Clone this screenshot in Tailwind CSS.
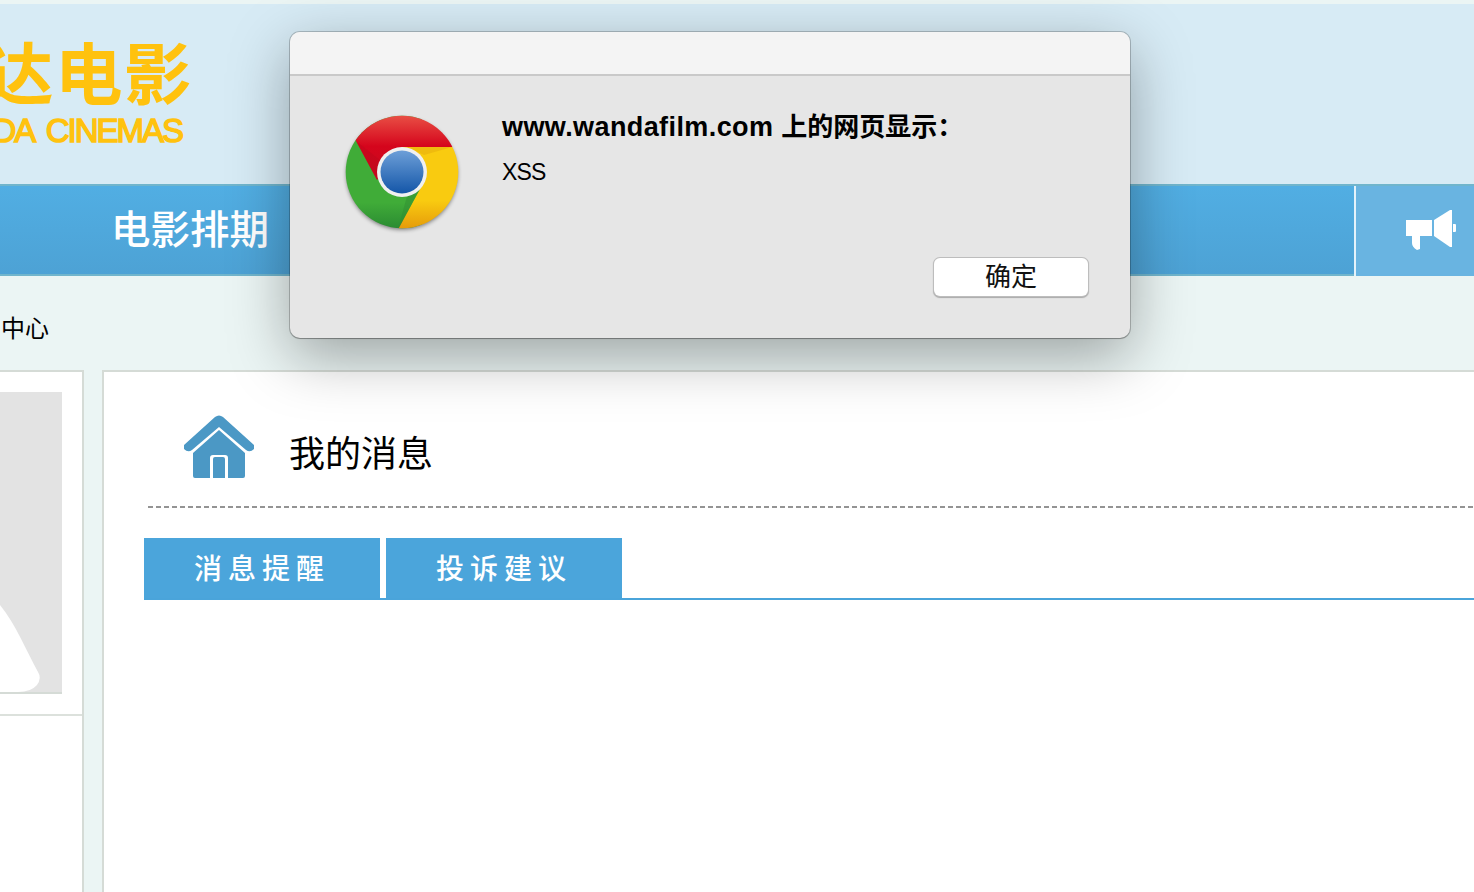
<!DOCTYPE html>
<html lang="zh-CN">
<head>
<meta charset="utf-8">
<title>我的消息</title>
<script src="https://cdn.jsdelivr.net/npm/@tailwindcss/browser@4"></script>
</head>
<body class="relative flex h-[892px] w-[1474px] flex-col overflow-hidden bg-[#ebf5f4] pt-1 font-['Liberation_Sans','Noto_Sans_CJK_SC',sans-serif] text-black">
  <header class="h-[180px] shrink-0 bg-[#d7ebf5]">
    <div class="flex w-[191px] flex-col items-end whitespace-nowrap pt-[34px] text-[#ffc20e]">
      <div class="mr-[-2px] h-[74px] text-[67.5px] leading-[75px] font-bold tracking-[1.5px]">达电影</div>
      <div class="mr-[9px] h-[36px] text-[33px] leading-[38px] tracking-[-2px] [word-spacing:6px] [-webkit-text-stroke:1.5px_#ffc20e]">DA CINEMAS</div>
    </div>
  </header>
  <nav class="flex h-[92px] shrink-0">
    <div class="flex w-[1354px] items-center border-y-2 border-[#70b5cc] bg-linear-to-b from-[#51aee3] to-[#4da2d5] pt-[2px] pl-[111px] text-[39.5px] font-medium text-white">
      <a class="leading-none">电影排期</a>
    </div>
    <div class="flex flex-1 border-t-2 border-[#70b5cc] bg-[#69b4e1]">
      <div class="w-[2px] bg-[#e4f2fa]"></div>
      <svg class="mt-[22px] ml-[49px]" width="54" height="46" viewBox="0 0 54 46" fill="#fff">
        <path d="M1 12h26v16H15v13l-3 1q-5-3-5-7v-7H1zM29 12 45 2h2v37h-2L29 28zM48 16h2q1 0 1 1v6q0 1-1 1h-2z"/>
      </svg>
    </div>
  </nav>
  <div class="flex h-[94px] shrink-0 items-center pt-[11px] pl-[1px] text-[24px]">中心</div>
  <main class="flex min-h-0 flex-1 gap-[18px]">
    <aside class="w-[84px] border-t-2 border-r-2 border-[#d5dbd6] bg-white">
      <div class="h-[344px] border-b-2 border-[#dce1dc] pt-5">
        <svg width="62" height="302" viewBox="0 0 62 302">
          <path fill="#e3e3e3" d="M0 0h62v300H0z"/>
          <path fill="#fff" d="M0 213C15 231 26 258 38 280Q42 286 37 293Q31 300 18 300H0z"/>
          <path fill="#d5dbd6" d="M0 300h62v2H0z"/>
        </svg>
      </div>
    </aside>
    <section class="flex-1 border-t-2 border-l-2 border-[#d5dbd6] bg-white pl-10">
      <div class="flex h-[134px] items-start">
        <svg class="mt-[43px] ml-[40px]" width="70" height="64" viewBox="0 0 70 64" fill="#4b98c5">
          <path d="M0 30 31 2Q35-1 39 2L70 30V34Q66 38 62 35L35 12 8 35Q4 38 0 34zM9 38 35 15 61 38V61Q61 63 59 63H44V43Q44 40 41 40H29Q26 40 26 43V63H11Q9 63 9 61zM29 44Q29 42 31 42H39Q41 42 41 44V63H29z"/>
        </svg>
        <h1 class="mt-[60px] ml-[35px] text-[36px] leading-[46px]">我的消息</h1>
      </div>
      <div class="ml-[4px] h-[2px] bg-[repeating-linear-gradient(to_right,#949494_0px,#949494_5px,transparent_5px,transparent_8px)]"></div>
      <div class="mt-[30px] flex h-[62px] gap-[6px] border-b-2 border-[#4aa4da] text-[28px] font-medium tracking-[6px] text-white">
        <a class="flex w-[236px] items-center bg-[#4ba5db] pt-[3px] pl-[50px]">消息提醒</a>
        <a class="flex w-[236px] items-center bg-[#4ba5db] pt-[3px] pl-[50px]">投诉建议</a>
      </div>
    </section>
  </main>

  <div class="absolute top-[32px] left-[290px] flex h-[306px] w-[840px] flex-col overflow-visible rounded-[10px] bg-[#e6e6e6] shadow-[0_0_0_1px_rgba(0,0,0,0.2),0_1px_1px_0_rgba(0,0,0,0.2),0_18px_60px_0_rgba(0,0,0,0.34)]">
    <div class="h-[44px] shrink-0 rounded-t-[10px] border-b-2 border-[#c9c9c9] bg-[#f4f4f4]"></div>
    <div class="flex h-[182px] shrink-0">
      <svg class="mt-[35px] ml-[50px] shrink-0" width="124" height="128" viewBox="-62 -61 124 128">
        <defs>
          <linearGradient id="r" gradientUnits="userSpaceOnUse" x1="0" y1="-57" x2="0" y2="8"><stop offset="0" stop-color="#e95045"/><stop offset=".48" stop-color="#d5051c"/><stop offset="1" stop-color="#c80a20"/></linearGradient>
          <linearGradient id="b" x1="0" y1="0" x2="0" y2="1"><stop offset="0" stop-color="#6d9fd8"/><stop offset="1" stop-color="#1456a8"/></linearGradient>
          <linearGradient id="s" x1="0" y1="0" x2="0" y2="1"><stop offset=".75" stop-color="#c04000" stop-opacity="0"/><stop offset="1" stop-color="#c04000" stop-opacity=".35"/></linearGradient>
          <linearGradient id="g" x1="0" y1="0" x2="0" y2="1"><stop offset=".75" stop-color="#40ac38"/><stop offset=".97" stop-color="#2a8a32"/></linearGradient>
          <filter id="f" x="-20%" y="-20%" width="140%" height="140%"><feGaussianBlur stdDeviation="2"/></filter>
          <clipPath id="c"><circle r="56.300"/></clipPath>
        </defs>
        <circle cy="2" r="55.500" opacity=".5" filter="url(#f)"/>
        <g clip-path="url(#c)">
          <path fill="url(#g)" d="M-62-61H20V61H-62z"/>
          <path fill="#f9cb10" d="M0-25H62V67H-9L18 17z"/>
          <path fill="url(#s)" d="M0-56.500H57V57H-4L18 17z"/>
          <path fill="#e6ac0c" opacity=".5" d="M0-25H50L22-17 12-22z"/>
          <path fill="#2e8b32" opacity=".45" d="M18 17-4 57-1 46 5 24z"/>
          <path fill="url(#r)" d="M-62-61H62V-25H0L-25 8-46-31z"/>
          <path fill="#b8081e" opacity=".35" d="M-46-31-22-12-25 8z"/>
        </g>
        <circle r="25" fill="#f0f0f0"/>
        <circle r="21.500" fill="url(#b)"/>
      </svg>
      <div class="ml-[38px] whitespace-nowrap pt-[32px]">
        <div class="flex h-[38px] items-center text-[26px] font-bold"><span class="text-[27px] tracking-[0.4px]">www.wandafilm.com</span><span class="ml-[8px] pt-[1px]">上的网页显示：</span></div>
        <div class="mt-[7px] text-[23px] leading-[38px] tracking-[-0.9px]">XSS</div>
      </div>
    </div>
    <div class="mr-[42px] flex h-[38px] w-[154px] items-center justify-center self-end rounded-[6px] bg-white text-[26px] leading-none text-[#111] shadow-[0_0_0_1px_#bdbdbd,0_1px_1px_1px_#a9a9a9]">确定</div>
  </div>
</body>
</html>
